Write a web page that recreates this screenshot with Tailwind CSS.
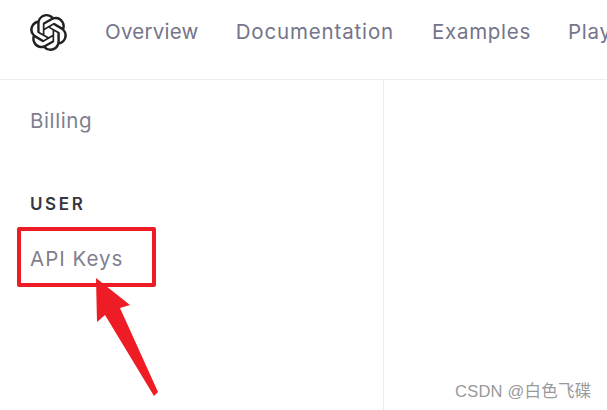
<!DOCTYPE html>
<html>
<head>
<meta charset="utf-8">
<script src="https://cdn.jsdelivr.net/npm/@tailwindcss/browser@4"></script>
</head>
<body class="bg-white">
<div class="relative w-[607px] h-[410px] overflow-hidden font-['Inter',sans-serif]">
  <header class="h-[80px] border-b border-[#ececf1] flex items-center pl-[30px] pb-[15px] whitespace-nowrap text-[20.5px] text-[#74748a] overflow-hidden">
    <svg class="w-[37px] h-[37px] text-[#202123] shrink-0" viewBox="0 0 24 24" fill="currentColor"><path d="M22.2819 9.8211a5.9847 5.9847 0 0 0-.5157-4.9108 6.0462 6.0462 0 0 0-6.5098-2.9A6.0651 6.0651 0 0 0 4.9807 4.1818a5.9847 5.9847 0 0 0-3.9977 2.9 6.0462 6.0462 0 0 0 .7427 7.0966 5.98 5.98 0 0 0 .511 4.9107 6.051 6.051 0 0 0 6.5146 2.9001A5.9847 5.9847 0 0 0 13.2599 24a6.0557 6.0557 0 0 0 5.7718-4.2058 5.9894 5.9894 0 0 0 3.9977-2.9001 6.0557 6.0557 0 0 0-.7475-7.0729zm-9.022 12.6081a4.4755 4.4755 0 0 1-2.8764-1.0408l.1419-.0804 4.7783-2.7582a.7948.7948 0 0 0 .3927-.6813v-6.7369l2.02 1.1686a.071.071 0 0 1 .038.052v5.5826a4.504 4.504 0 0 1-4.4945 4.4944zm-9.6607-4.1254a4.4708 4.4708 0 0 1-.5346-3.0137l.142.0852 4.783 2.7582a.7712.7712 0 0 0 .7806 0l5.8428-3.3685v2.3324a.0804.0804 0 0 1-.0332.0615L9.74 19.9502a4.4992 4.4992 0 0 1-6.1408-1.6464zM2.3408 7.8956a4.485 4.485 0 0 1 2.3655-1.9728V11.6a.7664.7664 0 0 0 .3879.6765l5.8144 3.3543-2.0201 1.1685a.0757.0757 0 0 1-.071 0l-4.8303-2.7865A4.504 4.504 0 0 1 2.3408 7.872zm16.5963 3.8558L13.1038 8.364 15.1192 7.2a.0757.0757 0 0 1 .071 0l4.8303 2.7913a4.4944 4.4944 0 0 1-.6765 8.1042v-5.6772a.79.79 0 0 0-.407-.667zm2.0107-3.0231l-.142-.0852-4.7735-2.7818a.7759.7759 0 0 0-.7854 0L9.409 9.2297V6.8974a.0662.0662 0 0 1 .0284-.0615l4.8303-2.7866a4.4992 4.4992 0 0 1 6.6802 4.66zM8.3065 12.863l-2.02-1.1638a.0804.0804 0 0 1-.038-.0567V6.0742a4.4992 4.4992 0 0 1 7.3757-3.4537l-.142.0805L8.704 5.459a.7948.7948 0 0 0-.3927.6813zm1.0976-2.3654l2.602-1.4998 2.6069 1.4998v2.9994l-2.5974 1.4997-2.6067-1.4997Z"/></svg>
    <span class="ml-[38px] tracking-[0.25px]">Overview</span>
    <span class="ml-[37px] tracking-[0.85px]">Documentation</span>
    <span class="ml-[38px] tracking-[0.7px]">Examples</span>
    <span class="ml-[37px] tracking-[0.75px]">Play</span>
  </header>
  <aside class="w-[384px] h-[330px] border-r border-[#ececf1] pl-[30px] pt-[26px] flex flex-col items-start">
    <a class="text-[20.5px] leading-[30px] tracking-[0.6px] text-[#7f7f90]">Billing</a>
    <h4 class="mt-[53px] text-[17px] leading-[30px] font-semibold tracking-[2.6px] text-[#353740]">USER</h4>
    <a class="mt-[25px] text-[20.5px] leading-[30px] tracking-[1px] text-[#7f7f90]">API Keys</a>
  </aside>
  <div class="absolute left-[17px] top-[227px] w-[139px] h-[60px] border-[4px] border-[#ee1c25] rounded-[2px]"></div>
  <svg class="absolute left-0 top-0" width="607" height="410" viewBox="0 0 607 410"><polygon points="96,278 130,305 120,308 158,392 154,396 105,315 97,322" fill="#ee1c25"/></svg>
  <span class="absolute left-[455px] top-[381px] text-[16.5px] leading-[20px] tracking-[0.25px] text-[#999999] font-['Liberation_Sans','Noto_Sans_CJK_SC',sans-serif]">CSDN @白色飞碟</span>
</div>
</body>
</html>
